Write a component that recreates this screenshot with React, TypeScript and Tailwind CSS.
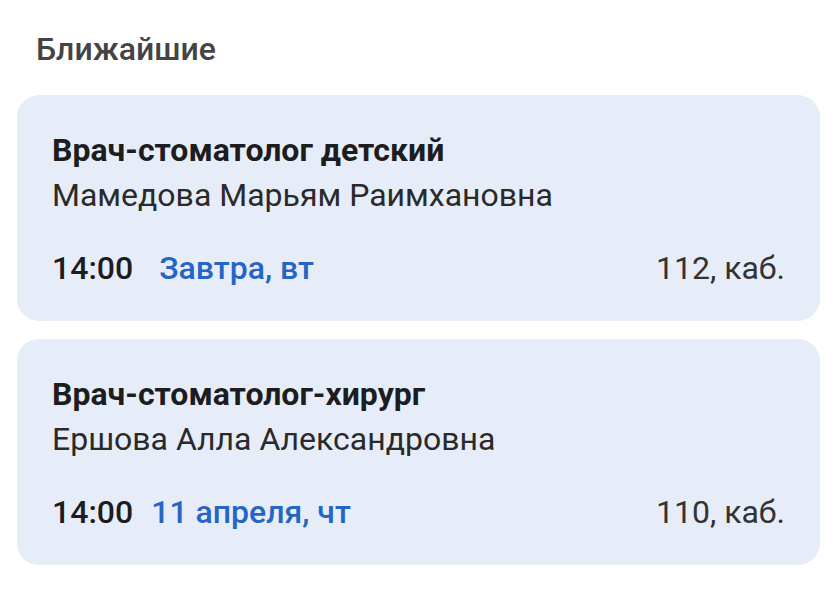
const visits = [
  {
    spec: "Врач-стоматолог детский",
    doctor: "Мамедова Марьям Раимхановна",
    time: "14:00",
    day: "Завтра, вт",
    room: "112, каб.",
    wide: true,
  },
  {
    spec: "Врач-стоматолог-хирург",
    doctor: "Ершова Алла Александровна",
    time: "14:00",
    day: "11 апреля, чт",
    room: "110, каб.",
    wide: false,
  },
];

export default function App() {
  return (
    <div className="min-h-screen bg-white font-['Roboto',sans-serif] px-[17px] pt-[27px]">
      <h2 className="pl-[19px] text-[32px] font-medium text-[#444] leading-[45px]">Ближайшие</h2>
      <div className="mt-[23px] flex flex-col gap-[18px] w-[803px]">
        {visits.map((v) => (
          <div key={v.spec} className="rounded-[22px] bg-[#e7edf8] px-[35px] pt-[33px] pb-[30px]">
            <div className="text-[32px] font-bold text-[#1d1d1f] leading-[45px]">{v.spec}</div>
            <div className="text-[32px] text-[#2a2a2a] leading-[45px]">{v.doctor}</div>
            <div className="mt-[28px] flex items-center justify-between leading-[45px]">
              <div className="flex items-center">
                <span className="text-[32px] font-medium text-[#1d1d1f]">{v.time}</span>
                <span className={v.wide ? "ml-[26px] text-[32px] font-medium text-[#2566c5]" : "ml-[18px] text-[32px] font-medium text-[#2566c5]"}>
                  {v.day}
                </span>
              </div>
              <span className="text-[32px] text-[#333]">{v.room}</span>
            </div>
          </div>
        ))}
      </div>
    </div>
  );
}
